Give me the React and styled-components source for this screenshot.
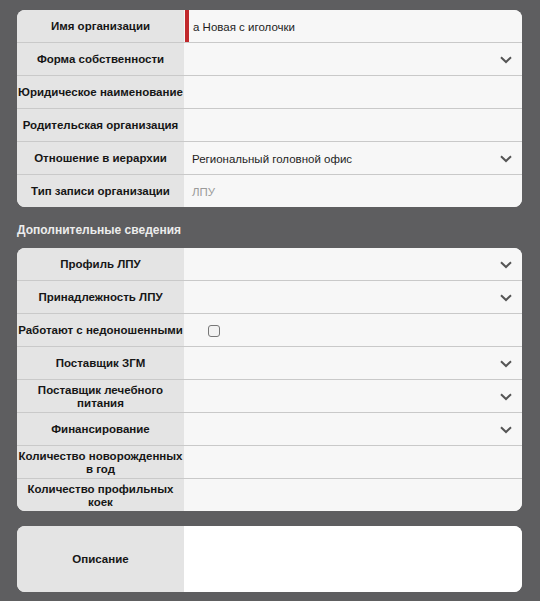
import React from "react";
import styled, { createGlobalStyle } from "styled-components";

const Global = createGlobalStyle`
  html, body { margin: 0; padding: 0; background: #5e5e60; }
  body { font-family: "Liberation Sans", Arial, sans-serif; }
`;

const Page = styled.div`
  width: 540px;
  min-height: 601px;
  box-sizing: border-box;
  padding: 10px 18px 0 17px;
  background: #5e5e60;
  display: flex;
  flex-direction: column;
`;

const Card = styled.div`
  background: #f7f7f7;
  border-radius: 8px;
  overflow: hidden;
  display: flex;
  flex-direction: column;
  margin-bottom: ${(p) => p.$mb || 0}px;
`;

const Row = styled.div`
  display: grid;
  grid-template-columns: 167px 1fr;
  height: ${(p) => p.$h || 32}px;
  border-bottom: 1px solid #c9c9c9;
  &:last-child { border-bottom: none; }
`;

const Label = styled.div`
  background: #e4e4e4;
  display: flex;
  align-items: center;
  justify-content: center;
  text-align: center;
  padding-top: 2px;
  font-weight: bold;
  font-size: 11.5px;
  line-height: 13.5px;
  color: #161616;
  white-space: pre-line;
`;

const Value = styled.div`
  position: relative;
  display: flex;
  align-items: center;
  padding: 2px 10px 0 8px;
  font-size: 11.5px;
  color: ${(p) => (p.$muted ? "#9a9a9a" : "#1e1e1e")};
  background: ${(p) => (p.$white ? "#ffffff" : "#f7f7f7")};
  ${(p) => p.$active && "border-left: 4px solid #c0282b; padding-left: 4px; margin-left: 1px;"}
`;

const Text = styled.span`
  flex: 1;
`;

const Chevron = styled.svg`
  width: 12px;
  height: 8px;
  flex: none;
  margin-top: -1px;
`;

const Check = styled.span`
  width: 10px;
  height: 10px;
  margin-left: 16px;
  margin-top: -1px;
  border: 1px solid #777;
  border-radius: 3px;
  background: #f2f2f2;
`;

const Heading = styled.div`
  color: #ececec;
  font-weight: bold;
  font-size: 12px;
  height: 41px;
  display: flex;
  align-items: center;
  padding-top: 4px;
  box-sizing: border-box;
`;

const Arrow = () => (
  <Chevron viewBox="0 0 12 8">
    <path d="M1 1.2 L6 6 L11 1.2" fill="none" stroke="#555" strokeWidth="2" />
  </Chevron>
);

const FieldRow = ({ label, value, select, muted, active, check, h, white }) => (
  <Row $h={h}>
    <Label>{label}</Label>
    <Value $muted={muted} $active={active} $white={white}>
      {check ? <Check /> : <Text>{value}</Text>}
      {select && <Arrow />}
    </Value>
  </Row>
);

export default function App() {
  return (
    <>
      <Global />
      <Page>
        <Card>
          <FieldRow label="Имя организации" value="а Новая с иголочки" active />
          <FieldRow label="Форма собственности" select />
          <FieldRow label="Юридическое наименование" />
          <FieldRow label="Родительская организация" />
          <FieldRow label="Отношение в иерархии" value="Региональный головной офис" select />
          <FieldRow label="Тип записи организации" value="ЛПУ" muted />
        </Card>
        <Heading>Дополнительные сведения</Heading>
        <Card $mb={15}>
          <FieldRow label="Профиль ЛПУ" select />
          <FieldRow label="Принадлежность ЛПУ" select />
          <FieldRow label="Работают с недоношенными" check />
          <FieldRow label="Поставщик ЗГМ" select />
          <FieldRow label={"Поставщик лечебного\nпитания"} select />
          <FieldRow label="Финансирование" select />
          <FieldRow label={"Количество новорожденных\nв год"} />
          <FieldRow label={"Количество профильных\nкоек"} />
        </Card>
        <Card>
          <FieldRow label="Описание" h={66} white />
        </Card>
      </Page>
    </>
  );
}
